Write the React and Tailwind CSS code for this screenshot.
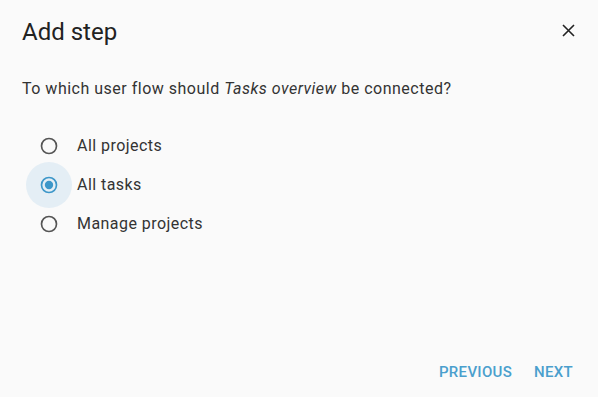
import { useState } from 'react';

const options = ['All projects', 'All tasks', 'Manage projects'];

const Radio = ({ checked }) => (
  <span
    className={`flex h-[46px] w-[46px] shrink-0 items-center justify-center rounded-full ${
      checked ? 'bg-[#e4eef5]' : ''
    }`}
  >
    <svg width="20" height="20" viewBox="0 0 24 24">
      <circle
        cx="12"
        cy="12"
        r="9"
        fill="none"
        stroke={checked ? '#3d97c9' : '#555555'}
        strokeWidth="2"
      />
      {checked && <circle cx="12" cy="12" r="5" fill="#3d97c9" />}
    </svg>
  </span>
);

const App = () => {
  const [selected, setSelected] = useState(1);

  return (
    <div className="flex h-[397px] w-[598px] flex-col bg-[#fafafa] font-['Roboto',sans-serif] text-[#333]">
      <div className="flex h-[32px] items-center justify-between pl-[22px] pr-[23px] mt-[16px]">
        <h2 className="text-[24px] leading-[32px] font-normal text-[#222]">Add step</h2>
        <button className="flex h-[14px] w-[14px] items-center justify-center mt-[-3px]">
          <svg width="13" height="13" viewBox="0 0 13 13">
            <path d="M1 1L12 12M12 1L1 12" stroke="#222" strokeWidth="1.6" />
          </svg>
        </button>
      </div>

      <p className="mt-[29px] pl-[22px] text-[16px] leading-[24px] tracking-[0.5px] text-[#333]">
        To which user flow should <em>Tasks overview</em> be connected?
      </p>

      <div className="mt-[25px] flex flex-col">
        {options.map((opt, i) => (
          <label
            key={opt}
            className="flex h-[39px] cursor-pointer items-center pl-[26px]"
            onClick={() => setSelected(i)}
          >
            <Radio checked={selected === i} />
            <span className="ml-[5px] text-[16px] leading-[24px] tracking-[0.45px] text-[#333]">
              {opt}
            </span>
          </label>
        ))}
      </div>

      <div className="flex-1" />

      <div className="flex justify-end gap-[6px] pb-[11px] pr-[17px]">
        <button className="px-[8px] py-[2px] text-[15px] leading-[24px] font-medium tracking-[0.3px] text-[#4a9fcd]">
          PREVIOUS
        </button>
        <button className="px-[8px] py-[2px] text-[15px] leading-[24px] font-medium tracking-[0.3px] text-[#4a9fcd]">
          NEXT
        </button>
      </div>
    </div>
  );
};

export default App;
